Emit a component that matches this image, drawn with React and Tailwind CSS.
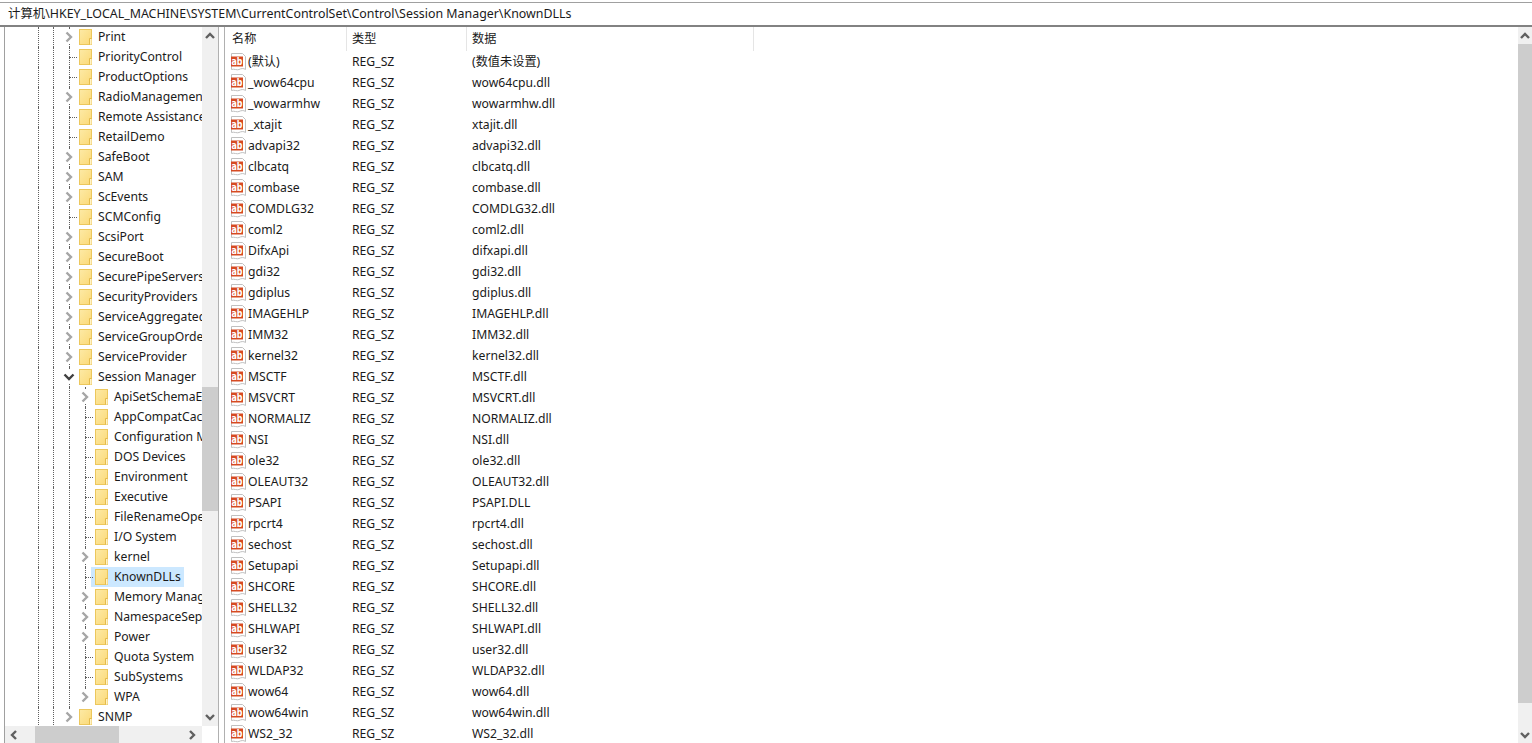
const font = "font-['Noto_Sans','Noto_Sans_CJK_SC',sans-serif]";

const tree = [
  { n: "Print", d: 3, c: 1 }, { n: "PriorityControl", d: 3 }, { n: "ProductOptions", d: 3 },
  { n: "RadioManagement", d: 3, c: 1 }, { n: "Remote Assistance", d: 3 }, { n: "RetailDemo", d: 3 },
  { n: "SafeBoot", d: 3, c: 1 }, { n: "SAM", d: 3, c: 1 }, { n: "ScEvents", d: 3, c: 1 },
  { n: "SCMConfig", d: 3 }, { n: "ScsiPort", d: 3, c: 1 }, { n: "SecureBoot", d: 3, c: 1 },
  { n: "SecurePipeServers", d: 3, c: 1 }, { n: "SecurityProviders", d: 3, c: 1 },
  { n: "ServiceAggregatedEvents", d: 3, c: 1 }, { n: "ServiceGroupOrder", d: 3, c: 1 },
  { n: "ServiceProvider", d: 3, c: 1 }, { n: "Session Manager", d: 3, c: 2 },
  { n: "ApiSetSchemaExtensions", d: 4, c: 1 }, { n: "AppCompatCache", d: 4 }, { n: "Configuration Manager", d: 4 },
  { n: "DOS Devices", d: 4 }, { n: "Environment", d: 4 }, { n: "Executive", d: 4 },
  { n: "FileRenameOperations", d: 4 }, { n: "I/O System", d: 4 }, { n: "kernel", d: 4, c: 1 },
  { n: "KnownDLLs", d: 4, sel: 1 }, { n: "Memory Management", d: 4, c: 1 }, { n: "NamespaceSeparation", d: 4, c: 1 },
  { n: "Power", d: 4, c: 1 }, { n: "Quota System", d: 4 }, { n: "SubSystems", d: 4 },
  { n: "WPA", d: 4, c: 1, last: 1 }, { n: "SNMP", d: 3, c: 1, last: 1 },
];

const rows = [
  ["(默认)", "(数值未设置)"], ["_wow64cpu", "wow64cpu.dll"], ["_wowarmhw", "wowarmhw.dll"], ["_xtajit", "xtajit.dll"],
  ["advapi32", "advapi32.dll"], ["clbcatq", "clbcatq.dll"], ["combase", "combase.dll"], ["COMDLG32", "COMDLG32.dll"],
  ["coml2", "coml2.dll"], ["DifxApi", "difxapi.dll"], ["gdi32", "gdi32.dll"], ["gdiplus", "gdiplus.dll"],
  ["IMAGEHLP", "IMAGEHLP.dll"], ["IMM32", "IMM32.dll"], ["kernel32", "kernel32.dll"], ["MSCTF", "MSCTF.dll"],
  ["MSVCRT", "MSVCRT.dll"], ["NORMALIZ", "NORMALIZ.dll"], ["NSI", "NSI.dll"], ["ole32", "ole32.dll"],
  ["OLEAUT32", "OLEAUT32.dll"], ["PSAPI", "PSAPI.DLL"], ["rpcrt4", "rpcrt4.dll"], ["sechost", "sechost.dll"],
  ["Setupapi", "Setupapi.dll"], ["SHCORE", "SHCORE.dll"], ["SHELL32", "SHELL32.dll"], ["SHLWAPI", "SHLWAPI.dll"],
  ["user32", "user32.dll"], ["WLDAP32", "WLDAP32.dll"], ["wow64", "wow64.dll"], ["wow64win", "wow64win.dll"],
  ["WS2_32", "WS2_32.dll"],
];

function Folder() {
  return (
    <svg width="13" height="16" viewBox="0 0 13 16" className="shrink-0">
      <defs>
        <linearGradient id="fg" x1="0" y1="0" x2="1" y2="1">
          <stop offset="0" stopColor="#fdeaa6" />
          <stop offset="1" stopColor="#fbd977" />
        </linearGradient>
      </defs>
      <rect x="0.5" y="0.5" width="12" height="15" fill="url(#fg)" stroke="#ecc75c" />
      <path d="M10.5 9.5V15.5" stroke="#e5bb4b" fill="none" />
      <path d="M10.5 9.5H12.5" stroke="#e5bb4b" fill="none" />
      <rect x="11" y="10" width="1.5" height="5.5" fill="#fff3c8" />
    </svg>
  );
}

function Chevron({ open }) {
  return open ? (
    <svg width="12" height="12" viewBox="0 0 12 12" className="block">
      <path d="M1.5 3.5L6 8L10.5 3.5" fill="none" stroke="#404040" strokeWidth="2.4" />
    </svg>
  ) : (
    <svg width="12" height="12" viewBox="0 0 12 12" className="block">
      <path d="M3.5 1.5L8 6L3.5 10.5" fill="none" stroke="#a6a6a6" strokeWidth="2.4" />
    </svg>
  );
}

function Guide({ w }) {
  return <span className={`h-full shrink-0 border-l border-dotted border-[#606060] ${w}`} />;
}

function Stem({ item }) {
  return (
    <span className="relative h-full w-[10px] shrink-0">
      <span className={`absolute left-0 top-0 border-l border-dotted border-[#606060] ${item.last ? "h-[10px]" : "h-full"}`} />
      {!item.c && <span className="absolute left-0 top-[10px] w-[8px] border-t border-dotted border-[#606060]" />}
      {item.c && (
        <span className="absolute -left-[7px] top-[3px] flex h-[14px] w-[14px] items-center justify-center bg-white">
          <Chevron open={item.c === 2} />
        </span>
      )}
    </span>
  );
}

function TreeRow({ item }) {
  return (
    <div className="flex h-5 items-center whitespace-nowrap">
      <span className="w-[33px] shrink-0" />
      <Guide w="w-[15px]" />
      <Guide w="w-[16px]" />
      {item.d === 4 && <Guide w="w-[16px]" />}
      <Stem item={item} />
      <span className={`flex h-5 items-center ${item.sel ? "-ml-[4px] bg-[#cce8ff] pl-[4px] pr-[3px]" : ""}`}>
        <Folder />
        <span className="ml-[6px] text-[#1a1a1a]">{item.n}</span>
      </span>
    </div>
  );
}

function AbIcon() {
  return (
    <svg width="17" height="18" viewBox="0 0 17 18" className="shrink-0">
      <path d="M1.5 0.5H12.5L15.5 3.5V16.5C13.5 15 11 15.5 9 16.5C7 17.5 4 15.5 1.5 16.5Z" fill="#fff" stroke="#c0c0c0" />
      <rect x="1" y="3.5" width="12" height="10" fill="#d64a22" />
      <text x="1.5" y="12" fontSize="11" fontWeight="700" fill="#fff" textLength="11" lengthAdjust="spacingAndGlyphs" fontFamily="'DejaVu Sans',sans-serif">ab</text>
    </svg>
  );
}

function ScrollBtn({ dir, className = "" }) {
  const d = {
    up: "M2 8L6 4L10 8",
    down: "M2 4L6 8L10 4",
    left: "M8 2L4 6L8 10",
    right: "M4 2L8 6L4 10",
  }[dir];
  return (
    <span className={`flex shrink-0 items-center justify-center ${className}`}>
      <svg width="12" height="12" viewBox="0 0 12 12"><path d={d} fill="none" stroke="#606060" strokeWidth="2.4" /></svg>
    </span>
  );
}

export default function App() {
  return (
    <div className={`${font} flex h-[743px] w-[1532px] flex-col overflow-hidden bg-white text-[12.2px] leading-5 text-[#1a1a1a]`}>
      <div className="mt-[2px] flex h-[23px] shrink-0 items-center border-t border-[#a0a0a0] pl-[8px] text-[12.4px]">
        计算机\HKEY_LOCAL_MACHINE\SYSTEM\CurrentControlSet\Control\Session Manager\KnownDLLs
      </div>
      <div className="h-[2px] shrink-0 bg-[#828282]" />
      <div className="flex min-h-0 flex-1">
        <div className="w-[4px] shrink-0 bg-white" />
        <div className="flex w-[214px] shrink-0 flex-col border-l border-[#a0a0a0]">
          <div className="flex min-h-0 flex-1">
            <div className="min-w-0 flex-1 overflow-hidden">
              {tree.map((t) => <TreeRow key={t.n} item={t} />)}
            </div>
            <div className="flex w-4 shrink-0 flex-col bg-[#f0f0f0]">
              <ScrollBtn dir="up" className="h-[17px]" />
              <div className="mt-[343px] h-[124px] bg-[#cdcdcd]" />
              <div className="flex-1" />
              <ScrollBtn dir="down" className="h-[19px]" />
            </div>
          </div>
          <div className="flex h-[17px] shrink-0 bg-[#f0f0f0]">
            <ScrollBtn dir="left" className="w-[17px]" />
            <div className="ml-[13px] w-[84px] bg-[#cdcdcd]" />
            <div className="flex-1" />
            <ScrollBtn dir="right" className="w-[20px]" />
            <div className="w-4 bg-white" />
          </div>
        </div>
        <div className="w-[7px] shrink-0 border-x border-[#b0b0b0] bg-white" />
        <div className="flex min-w-0 flex-1 flex-col">
          <div className="flex h-[24px] shrink-0 items-center">
            <div className="flex h-full w-[122px] items-center border-r border-[#e5e5e5] pl-[7px]">名称</div>
            <div className="flex h-full w-[120px] items-center border-r border-[#e5e5e5] pl-[5px]">类型</div>
            <div className="flex h-full w-[287px] items-center border-r border-[#e5e5e5] pl-[5px]">数据</div>
          </div>
          <div className="min-h-0 flex-1 overflow-hidden">
            {rows.map(([n, v]) => (
              <div key={n} className="flex h-[21px] items-center whitespace-nowrap">
                <div className="flex w-[127px] shrink-0 items-center pl-[5px]"><AbIcon /><span className="ml-[1px]">{n}</span></div>
                <div className="w-[120px] shrink-0">REG_SZ</div>
                <div>{v}</div>
              </div>
            ))}
          </div>
        </div>
        <div className="flex w-[14px] shrink-0 flex-col bg-[#f0f0f0]">
          <ScrollBtn dir="up" className="h-[17px]" />
          <div className="h-[659px] bg-[#cdcdcd]" />
          <div className="flex-1" />
          <ScrollBtn dir="down" className="h-[17px]" />
        </div>
      </div>
    </div>
  );
}
